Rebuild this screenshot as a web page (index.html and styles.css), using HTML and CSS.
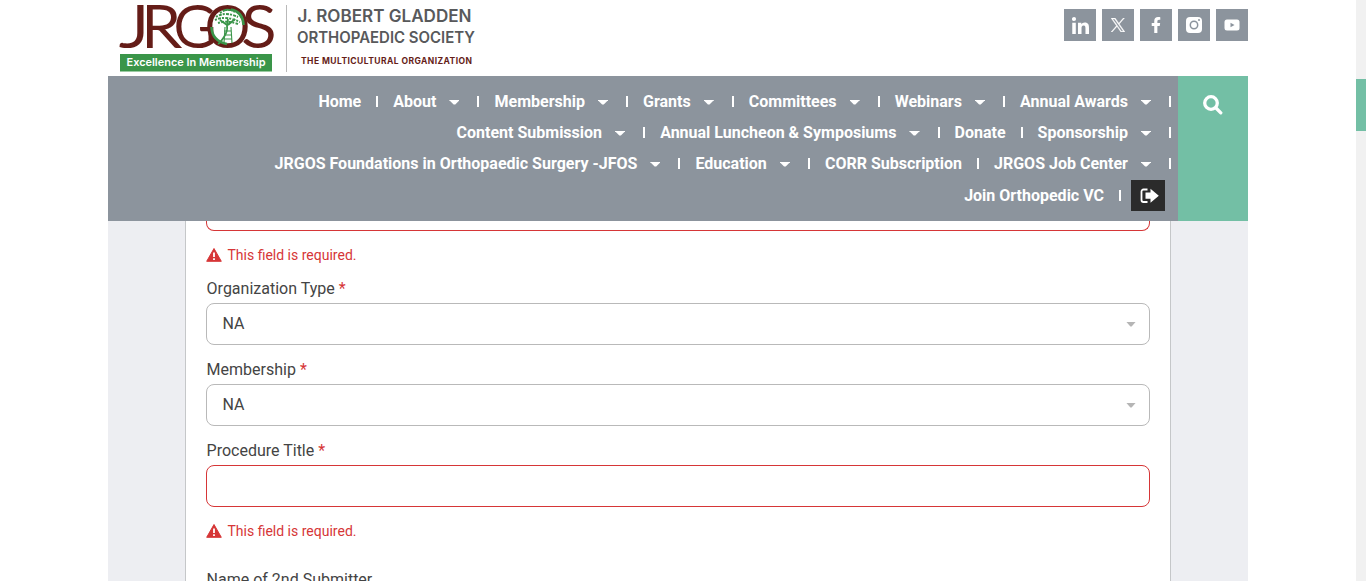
FILE: index.html
```html
<!DOCTYPE html>
<html lang="en">
<head>
<meta charset="utf-8">
<title>J. Robert Gladden Orthopaedic Society</title>
<link rel="stylesheet" href="styles.css">
</head>
<body>
<div class="page">
  <header class="site-header">
    <div class="top">
      <svg class="logo" width="380" height="76" viewBox="0 0 380 76" role="img" aria-label="JRGOS">
        <g class="logo-mark">
          <text x="12" y="47" textLength="29" lengthAdjust="spacingAndGlyphs">J</text>
          <text x="33.500" y="47" textLength="39" lengthAdjust="spacingAndGlyphs">R</text>
          <text x="66" y="47" textLength="42" lengthAdjust="spacingAndGlyphs">G</text>
          <text x="97" y="47" textLength="45" lengthAdjust="spacingAndGlyphs">O</text>
          <text x="134" y="47" textLength="34" lengthAdjust="spacingAndGlyphs">S</text>
        </g>
        <g class="tree">
          <path class="leaves" d="M112 13q7-6 15-1M108 17q9-6 22 0M107 20q10-5 25 2M110 23q9-3 20 1M117 10h5"/>
          <path class="trunk" d="M120 19L119 26Q120 31 116 37T110 44M120 25L127 19M119 25L112 20"/>
          <path class="ladder" d="M117 27L116 43M123 27L124 43M116 31H123M116 35H124M116 39H124"/>
          <path class="ring" d="M103.500 27Q104 41 119 44M123 9.500Q135 12 135.500 25"/>
        </g>
        <rect class="ribbon" x="12" y="54" width="152" height="17.500"/>
        <text class="ribbon-text" x="18.500" y="66" textLength="139" lengthAdjust="spacingAndGlyphs">Excellence In Membership</text>
        <rect class="rule" x="178" y="5" width="1" height="67"/>
        <text class="name" x="189.500" y="22" textLength="174" lengthAdjust="spacingAndGlyphs">J. ROBERT GLADDEN</text>
        <text class="name-sub" x="189" y="43" textLength="178" lengthAdjust="spacingAndGlyphs">ORTHOPAEDIC SOCIETY</text>
        <text class="tagline" x="193" y="63.500" textLength="171">THE MULTICULTURAL ORGANIZATION</text>
      </svg>
      <div class="social">
        <a class="social-link"><svg class="linkedin" width="18" height="18" viewBox="0 0 448 448"><path d="M100 448H7V149h93zM53 108A54 54 0 1 1 53 0a54 54 0 0 1 0 108zM448 448h-93V302c0-35-1-79-48-79-49 0-56 38-56 77v148h-93V149h89v41h1c12-24 43-48 88-48 94 0 112 62 112 142z"/></svg></a>
        <a class="social-link"><svg class="x" width="14" height="14" viewBox="0 0 24 24"><path d="M14.300 10.200 23.200 0h-2.100l-7.700 8.800L7.200 0H0l9.300 13.400L0 24h2.100l8.200-9.300 6.500 9.300H24zm-2.900 3.300-.9-1.400L2.900 1.600h3.200l6.100 8.700 1 1.300 7.900 11.200h-3.200z"/></svg></a>
        <a class="social-link"><svg width="16" height="16" viewBox="0 0 320 512"><path d="m279 288 14-93h-89v-60c0-25 13-50 53-50h40V7s-37-7-72-7c-73 0-121 44-121 125v70H23v93h81v224h100V288z"/></svg></a>
        <a class="social-link"><svg width="16" height="16" viewBox="0 0 16 16"><rect width="16" height="16" rx="4"/><circle class="cut" cx="8" cy="8" r="3.700"/><circle class="dot" cx="13" cy="3" r="1"/></svg></a>
        <a class="social-link"><svg width="16" height="12" viewBox="0 0 16 12"><rect x=".5" y=".5" width="15" height="11" rx="2.500"/><path class="play" d="M6.500 3.700v4.600L10.500 6z"/></svg></a>
      </div>
    </div>
    <div class="bar">
      <nav class="menu">
        <div class="menu-row"><a>Home</a><i></i><a class="sub">About</a><i></i><a class="sub">Membership</a><i></i><a class="sub">Grants</a><i></i><a class="sub">Committees</a><i></i><a class="sub">Webinars</a><i></i><a class="sub">Annual Awards</a><i></i></div>
        <div class="menu-row"><a class="sub">Content Submission</a><i></i><a class="sub">Annual Luncheon &amp; Symposiums</a><i></i><a>Donate</a><i></i><a class="sub">Sponsorship</a><i></i></div>
        <div class="menu-row"><a class="sub">JRGOS Foundations in Orthopaedic Surgery -JFOS</a><i></i><a class="sub">Education</a><i></i><a>CORR Subscription</a><i></i><a class="sub">JRGOS Job Center</a><i></i></div>
        <div class="menu-row menu-row-last"><a>Join Orthopedic VC</a><i></i><span class="login"><svg width="19" height="16" viewBox="0 0 19 16"><path class="door" d="M7.500 1.500H3.500a2 2 0 0 0-2 2v8.500a2 2 0 0 0 2 2H7.500"/><path d="M5.500 4.500h5V.8L18.800 7.700 10.500 14.700v-3.900h-5z"/></svg></span></div>
      </nav>
      <div class="search"><svg width="20" height="20" viewBox="0 0 20 20"><circle cx="8" cy="8" r="6.300"/><path d="m13 13 4.800 4.800"/></svg></div>
    </div>
  </header>
  <main class="content">
    <form class="form">
      <div class="input error clipped"></div>
      <p class="message"><svg width="16" height="14" viewBox="0 0 16 14"><path d="M8 .5 15.300 13.300H.7z"/><path class="mark" d="M8 4.500v4.500M8 10.300v1.700"/></svg>This field is required.</p>
      <label class="label">Organization Type <b>*</b></label>
      <div class="input select">NA</div>
      <label class="label">Membership <b>*</b></label>
      <div class="input select">NA</div>
      <label class="label">Procedure Title <b>*</b></label>
      <div class="input error"></div>
      <p class="message"><svg width="16" height="14" viewBox="0 0 16 14"><path d="M8 .5 15.300 13.300H.7z"/><path class="mark" d="M8 4.500v4.500M8 10.300v1.700"/></svg>This field is required.</p>
      <label class="label label-next">Name of 2nd Submitter</label>
    </form>
  </main>
</div>
<div class="scrollbar"><div class="thumb"></div></div>
</body>
</html>
```

FILE: styles.css
```css
* { box-sizing: border-box; }
body {
  margin: 0;
  height: 581px;
  overflow: hidden;
  display: flex;
  background: #fff;
  font-family: Roboto, "Liberation Sans", sans-serif;
  font-size: 16px;
}
.page { width: 1140px; margin-left: 108px; flex: none; }

/* Header */
.top { height: 76px; display: flex; justify-content: space-between; }
.logo { display: block; }
.logo-mark { font: 300 58px Lato, sans-serif; fill: #651d18; stroke: #651d18; stroke-width: 2.2; }
.tree path { fill: none; stroke: #3a9549; }
.tree .leaves { stroke-width: 2; stroke-dasharray: 2 1.3 3 1; }
.tree .trunk { stroke-width: 1.8; }
.tree .ladder { stroke-width: 1.1; }
.tree .ring { stroke-width: 2.6; }
.ribbon { fill: #3a9549; }
.ribbon-text { font: 600 11px Inter, sans-serif; fill: #fff; }
.rule { fill: #b9b9b9; }
.name { font: 600 17px Inter, sans-serif; fill: #58595b; }
.name-sub { font: 600 15.500px Inter, sans-serif; fill: #58595b; }
.tagline { font: 700 8.500px Inter, sans-serif; fill: #651d18; }
.social { display: flex; gap: 6px; padding-top: 9px; }
.social-link { width: 32px; height: 32px; display: grid; place-items: center; background: #8c949d; }
.social-link svg { fill: #fff; }
.social-link .linkedin { width: 17px; height: 17px; }
.social-link .x { stroke: #fff; stroke-width: .6; }
.social-link .cut { fill: none; stroke: #8c949d; stroke-width: 1.500; }
.social-link .dot, .social-link .play { fill: #8c949d; }
.bar { height: 145px; display: flex; background: #8c949d; }
.menu { width: 1070px; padding: 10px 7px 0 0; color: #fff; font-weight: 700; }
.menu-row { height: 31px; display: flex; align-items: center; justify-content: flex-end; gap: 15px; white-space: nowrap; }
.menu-row i { width: 2px; height: 11px; background: #fff; }
.menu-row a { display: flex; align-items: center; }
.sub::after {
  content: "";
  width: 10.100px;
  height: 5px;
  margin: 1px 3px 0 13px;
  background: #fff;
  clip-path: polygon(0 0, 100% 0, 100% 14%, 58% 100%, 42% 100%, 0 14%);
}
.menu-row-last { height: 33px; gap: 14px; padding-right: 6px; }
.menu-row-last a { margin-right: 1px; }
.login { width: 34px; height: 31px; margin-left: -4px; padding-left: 3px; display: grid; place-items: center; background: #2b2b2b; }
.login svg { fill: #fff; }
.login .door { fill: none; stroke: #fff; stroke-width: 1.800; }
.search { width: 70px; padding: 19px 0 0 25px; background: #73bfa5; }
.search svg { fill: none; stroke: #fff; stroke-width: 3.3; stroke-linecap: round; }

/* Form */
.content { height: 360px; padding: 0 77px; background: #edeef2; overflow: hidden; }
.form { height: 360px; padding: 0 20px; background: #fff; border: 1px solid #c5c7c9; border-width: 0 1px; }
.input { height: 42px; display: flex; align-items: center; justify-content: space-between; padding: 0 13px 1px 15.500px; border: 1px solid #b9b9b9; border-radius: 8px; color: #444; }
.error { border-color: #d63637; }
.clipped { height: 10px; border-top: 0; border-radius: 0 0 8px 8px; }
.select::after { content: ""; width: 10px; height: 5px; margin-top: 1px; background: #b5b5b5; clip-path: polygon(0 0, 100% 0, 56% 100%, 44% 100%); }
.message { height: 48px; margin: 0; display: flex; align-items: center; gap: 5.500px; color: #d63637; font-size: 14px; }
.message svg { fill: #d63637; stroke: #d63637; stroke-linejoin: round; }
.message .mark { fill: none; stroke: #fff; stroke-width: 1.800; }
.label { display: block; height: 39px; line-height: 19px; padding: 15px 0 0 .6px; color: #444; }
.message + .label { height: 24px; padding-top: 0; }
.label b { color: #d63637; font-weight: 400; }
.message + .label-next { padding-top: 15px; height: 39px; }

/* Scroll position indicator */
.scrollbar { width: 10px; margin-left: auto; padding-top: 79px; background: #f1f1f1; }
.thumb { height: 52px; background: #73bfa5; }
```
